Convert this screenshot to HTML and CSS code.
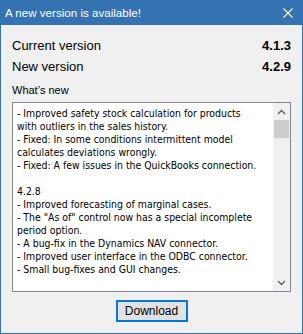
FILE: index.html
```html
<!DOCTYPE html>
<html lang="en">
<head>
  <meta charset="UTF-8">
  <title>A new version is available!</title>
  <link rel="stylesheet" href="styles.css">
</head>
<body>
  <div class="window">
    <div class="titlebar">
      <span class="title">A new version is available!</span>
      <svg class="close" width="10" height="10" viewBox="0 0 10 10">
        <path d="M0.5 0.5L9.5 9.5M9.5 0.5L0.5 9.5" stroke="#fff" stroke-width="1.1" fill="none"/>
      </svg>
    </div>
    <div class="content">
      <div class="row">
        <span>Current version</span>
        <b>4.1.3</b>
      </div>
      <div class="row">
        <span>New version</span>
        <b>4.2.9</b>
      </div>
      <div class="whatsnew">What’s new</div>
      <div class="notes">
        <div class="notes-text">
          - Improved safety stock calculation for products<br>
          with outliers in the sales history.<br>
          - Fixed: In some conditions intermittent model<br>
          calculates deviations wrongly.<br>
          - Fixed: A few issues in the QuickBooks connection.<br>
          <br>
          4.2.8<br>
          - Improved forecasting of marginal cases.<br>
          - The "As of" control now has a special incomplete<br>
          period option.<br>
          - A bug-fix in the Dynamics NAV connector.<br>
          - Improved user interface in the ODBC connector.<br>
          - Small bug-fixes and GUI changes.
        </div>
        <div class="scrollbar">
          <svg width="9" height="6" viewBox="0 0 9 6"><path d="M1 5L4.5 1.5L8 5" stroke="#606060" stroke-width="1.4" fill="none"/></svg>
          <div class="thumb"></div>
          <div class="track"></div>
          <svg width="9" height="6" viewBox="0 0 9 6"><path d="M1 1L4.5 4.5L8 1" stroke="#606060" stroke-width="1.4" fill="none"/></svg>
        </div>
      </div>
      <div class="actions">
        <button>Download</button>
      </div>
    </div>
  </div>
</body>
</html>
```

FILE: styles.css
```css
* {
  box-sizing: border-box;
}
body {
  margin: 0;
  font-family: "Liberation Sans", Arial, sans-serif;
  background: #f0f0f0;
}
.window {
  width: 303px;
  height: 334px;
  border: 1px solid #3572b2;
  border-top: none;
  display: flex;
  flex-direction: column;
  background: #f0f0f0;
}
.titlebar {
  height: 25px;
  background: #3572b2;
  color: #fff;
  display: flex;
  align-items: center;
  justify-content: space-between;
  padding: 0 9px 0 4px;
  font-size: 11.6px;
}
.content {
  flex: 1;
  padding: 10px 11px 0 11px;
  display: flex;
  flex-direction: column;
}
.row {
  display: flex;
  justify-content: space-between;
  font-size: 13px;
  height: 21px;
  line-height: 21px;
  color: #000;
}
.row b {
  font-weight: bold;
}
.whatsnew {
  font-size: 11px;
  margin-top: 6px;
  height: 19px;
  line-height: 14px;
}
.notes {
  height: 190px;
  border: 1px solid #828790;
  background: #fff;
  display: flex;
}
.notes-text {
  flex: 1;
  padding: 4px 0 0 4px;
  font-family: "DejaVu Sans Condensed", "DejaVu Sans", sans-serif;
  font-size: 10.4px;
  line-height: 13px;
  overflow: hidden;
  white-space: nowrap;
}
.scrollbar {
  width: 17px;
  background: #f0f0f0;
  display: flex;
  flex-direction: column;
  align-items: center;
  padding: 6px 0 5px;
}
.thumb {
  width: 15px;
  height: 18px;
  background: #cdcdcd;
  margin-top: 5px;
}
.track {
  flex: 1;
}
.actions {
  display: flex;
  justify-content: center;
  padding-top: 8px;
}
button {
  width: 72px;
  height: 22px;
  border: 2px solid #0078d7;
  background: #e1e1e1;
  font-family: inherit;
  font-size: 12px;
  color: #000;
  padding: 0;
}
```
